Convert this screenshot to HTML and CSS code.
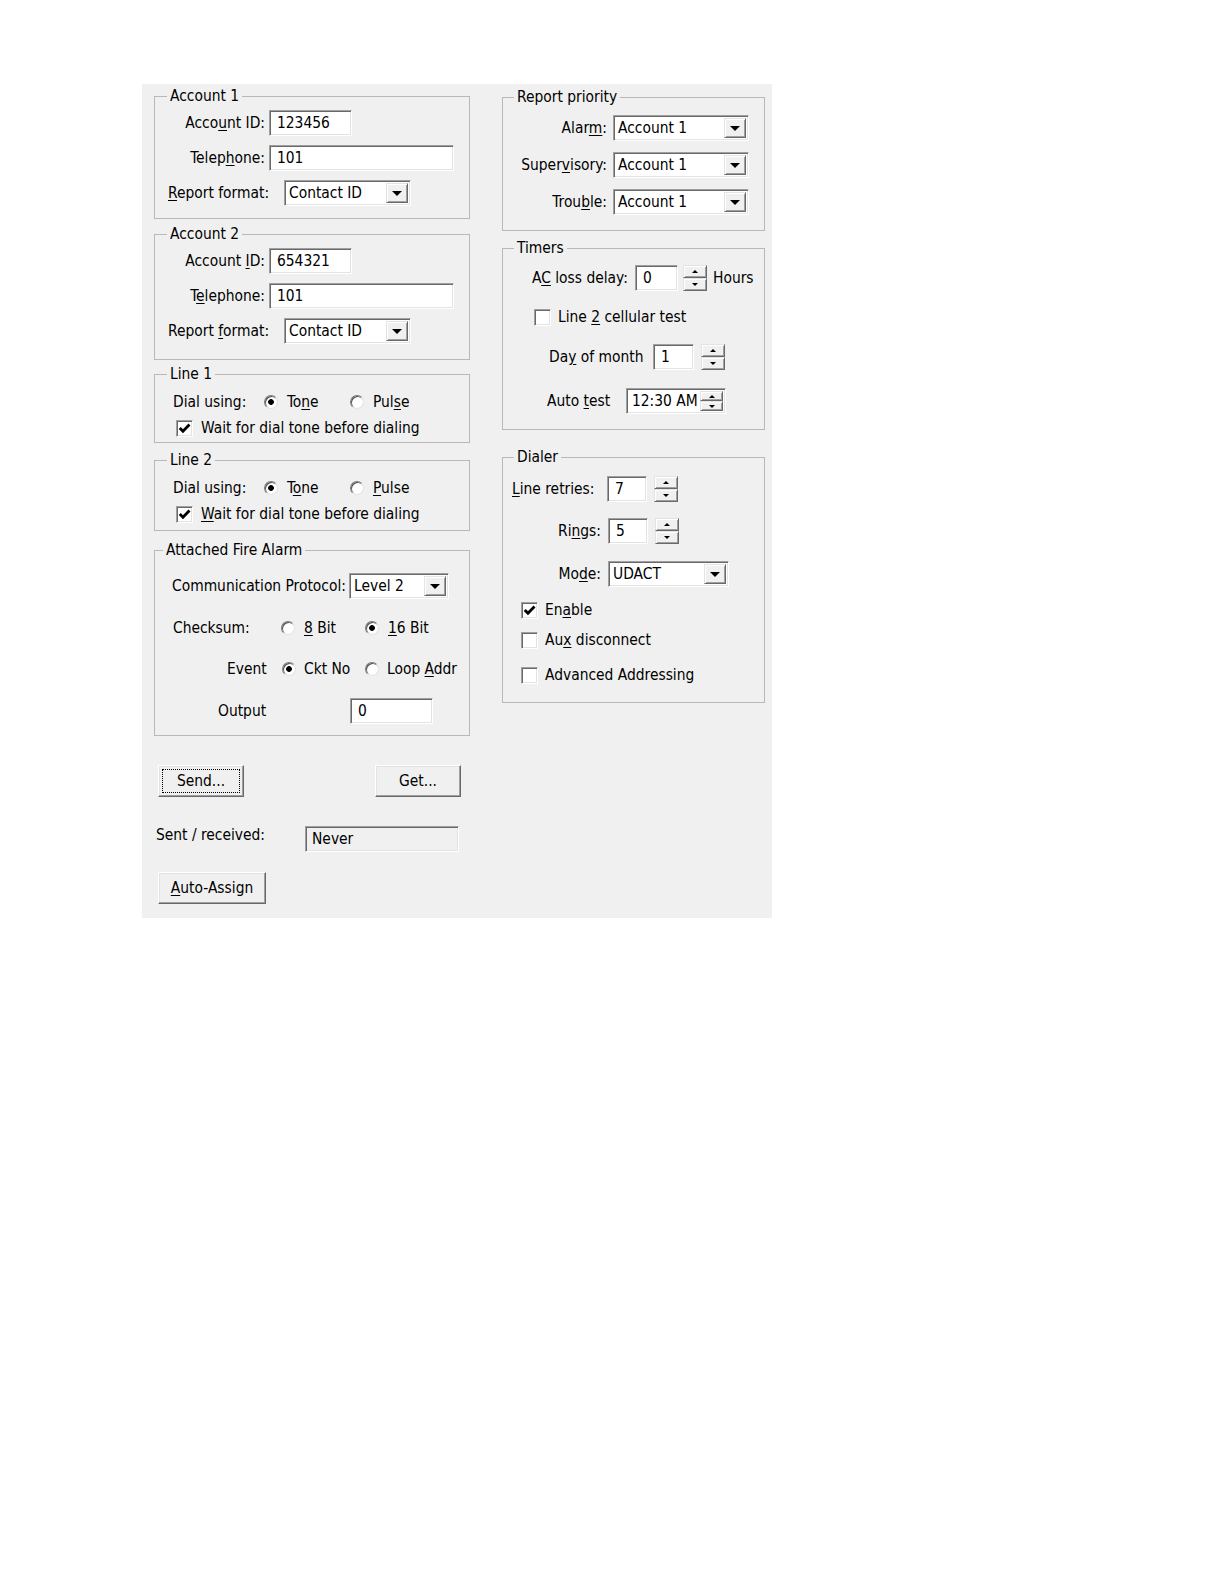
FILE: index.html
```html
<!DOCTYPE html>
<html lang="en">
<head>
<meta charset="utf-8">
<title>Communicator settings</title>
<link rel="stylesheet" href="styles.css">
</head>
<body>
<div class="panel">
  <div class="col col-left">

    <fieldset class="group acct acct1">
      <legend>Account 1</legend>
      <div class="row row-acct first">
        <span class="lbl lbl-acct">Acco<u>u</u>nt ID:</span>
        <span class="edit w-id">123456</span>
      </div>
      <div class="row row-acct">
        <span class="lbl lbl-acct">Telep<u>h</u>one:</span>
        <span class="edit w-tel">101</span>
      </div>
      <div class="row row-acct">
        <span class="lbl lbl-fmt"><u>R</u>eport format:</span>
        <span class="combo w-fmt"><span class="combo-text">Contact ID</span><span class="combo-btn"><i class="tri-down"></i></span></span>
      </div>
    </fieldset>

    <fieldset class="group acct acct2">
      <legend>Account 2</legend>
      <div class="row row-acct first">
        <span class="lbl lbl-acct">Account <u>I</u>D:</span>
        <span class="edit w-id">654321</span>
      </div>
      <div class="row row-acct">
        <span class="lbl lbl-acct">T<u>e</u>lephone:</span>
        <span class="edit w-tel">101</span>
      </div>
      <div class="row row-acct">
        <span class="lbl lbl-fmt">Report <u>f</u>ormat:</span>
        <span class="combo w-fmt"><span class="combo-text">Contact ID</span><span class="combo-btn"><i class="tri-down"></i></span></span>
      </div>
    </fieldset>

    <fieldset class="group line line1">
      <legend>Line 1</legend>
      <div class="row row-opt first">
        <span class="lbl lbl-dial">Dial using:</span>
        <span class="opt opt-tone"><span class="radio on"></span><span class="opt-text">To<u>n</u>e</span></span>
        <span class="opt"><span class="radio"></span><span class="opt-text">Pul<u>s</u>e</span></span>
      </div>
      <div class="row row-opt row-wait">
        <span class="check on"><svg viewBox="0 0 12 12"><path d="M1.6 5.6 L4.6 8.6 L10.6 2.4" /></svg></span>
        <span class="check-text">Wait for dial tone before dialing</span>
      </div>
    </fieldset>

    <fieldset class="group line line2">
      <legend>Line 2</legend>
      <div class="row row-opt first">
        <span class="lbl lbl-dial">Dial using:</span>
        <span class="opt opt-tone"><span class="radio on"></span><span class="opt-text">T<u>o</u>ne</span></span>
        <span class="opt"><span class="radio"></span><span class="opt-text"><u>P</u>ulse</span></span>
      </div>
      <div class="row row-opt row-wait">
        <span class="check on"><svg viewBox="0 0 12 12"><path d="M1.6 5.6 L4.6 8.6 L10.6 2.4" /></svg></span>
        <span class="check-text"><u>W</u>ait for dial tone before dialing</span>
      </div>
    </fieldset>

    <fieldset class="group fire">
      <legend>Attached Fire Alarm</legend>
      <div class="row row-proto">
        <span class="lbl lbl-proto">Communication Protocol:</span>
        <span class="combo w-proto"><span class="combo-text">Level 2</span><span class="combo-btn"><i class="tri-down"></i></span></span>
      </div>
      <div class="row row-opt row-cks">
        <span class="lbl lbl-cks">Checksum:</span>
        <span class="opt opt-8bit"><span class="radio"></span><span class="opt-text"><u>8</u> Bit</span></span>
        <span class="opt"><span class="radio on"></span><span class="opt-text"><u>1</u>6 Bit</span></span>
      </div>
      <div class="row row-opt row-event">
        <span class="lbl lbl-event">Event</span>
        <span class="opt opt-ckt"><span class="radio on"></span><span class="opt-text">Ckt No</span></span>
        <span class="opt"><span class="radio"></span><span class="opt-text">Loop <u>A</u>ddr</span></span>
      </div>
      <div class="row row-out">
        <span class="lbl lbl-out">Output</span>
        <span class="edit w-out">0</span>
      </div>
    </fieldset>

    <div class="btn-row">
      <span class="btn btn-default w-btn"><span class="focus">Send...</span></span>
      <span class="btn w-btn">Get...</span>
    </div>

    <div class="row sent-row">
      <span class="lbl lbl-sent">Sent / received:</span>
      <span class="static w-never">Never</span>
    </div>

    <div class="assign-row">
      <span class="btn w-assign"><u>A</u>uto-Assign</span>
    </div>
  </div>

  <div class="col col-right">

    <fieldset class="group prio">
      <legend>Report priority</legend>
      <div class="row row-prio first">
        <span class="lbl lbl-prio">Alar<u>m</u>:</span>
        <span class="combo w-prio"><span class="combo-text">Account 1</span><span class="combo-btn"><i class="tri-down"></i></span></span>
      </div>
      <div class="row row-prio">
        <span class="lbl lbl-prio">Super<u>v</u>isory:</span>
        <span class="combo w-prio"><span class="combo-text">Account 1</span><span class="combo-btn"><i class="tri-down"></i></span></span>
      </div>
      <div class="row row-prio">
        <span class="lbl lbl-prio">Trou<u>b</u>le:</span>
        <span class="combo w-prio"><span class="combo-text">Account 1</span><span class="combo-btn"><i class="tri-down"></i></span></span>
      </div>
    </fieldset>

    <fieldset class="group timers">
      <legend>Timers</legend>
      <div class="row row-ac">
        <span class="lbl lbl-ac">A<u>C</u> loss delay:</span>
        <span class="edit w-ac">0</span>
        <span class="spin spin-ac"><span class="spin-btn"><i class="tri-up-s"></i></span><span class="spin-btn"><i class="tri-down-s"></i></span></span>
        <span class="hours">Hours</span>
      </div>
      <div class="row row-opt row-cell">
        <span class="check"></span>
        <span class="check-text">Line <u>2</u> cellular test</span>
      </div>
      <div class="row row-day">
        <span class="lbl lbl-day">Da<u>y</u> of month</span>
        <span class="edit w-day">1</span>
        <span class="spin spin-day"><span class="spin-btn"><i class="tri-up-s"></i></span><span class="spin-btn"><i class="tri-down-s"></i></span></span>
      </div>
      <div class="row row-auto">
        <span class="lbl lbl-auto">Auto <u>t</u>est</span>
        <span class="dtp w-dtp"><span class="dtp-text">12:30 AM</span><span class="spin spin-dtp"><span class="spin-btn"><i class="tri-up-s"></i></span><span class="spin-btn"><i class="tri-down-s"></i></span></span></span>
      </div>
    </fieldset>

    <fieldset class="group dialer">
      <legend>Dialer</legend>
      <div class="row row-retries">
        <span class="lbl lbl-retries"><u>L</u>ine retries:</span>
        <span class="edit w-small">7</span>
        <span class="spin spin-dial"><span class="spin-btn"><i class="tri-up-s"></i></span><span class="spin-btn"><i class="tri-down-s"></i></span></span>
      </div>
      <div class="row row-rings">
        <span class="lbl lbl-dr">Ri<u>n</u>gs:</span>
        <span class="edit w-small">5</span>
        <span class="spin spin-dial"><span class="spin-btn"><i class="tri-up-s"></i></span><span class="spin-btn"><i class="tri-down-s"></i></span></span>
      </div>
      <div class="row row-mode">
        <span class="lbl lbl-dr">Mo<u>d</u>e:</span>
        <span class="combo w-mode"><span class="combo-text">UDACT</span><span class="combo-btn"><i class="tri-down"></i></span></span>
      </div>
      <div class="row row-opt row-enable">
        <span class="check on"><svg viewBox="0 0 12 12"><path d="M1.6 5.6 L4.6 8.6 L10.6 2.4" /></svg></span>
        <span class="check-text">En<u>a</u>ble</span>
      </div>
      <div class="row row-opt row-aux">
        <span class="check"></span>
        <span class="check-text">Au<u>x</u> disconnect</span>
      </div>
      <div class="row row-opt row-adv">
        <span class="check"></span>
        <span class="check-text">Advanced Addressing</span>
      </div>
    </fieldset>
  </div>
</div>
</body>
</html>
```

FILE: styles.css
```css
* {
  box-sizing: border-box;
}

body {
  margin: 0;
  background: #ffffff;
  color: #000000;
  font-family: "DejaVu Sans Condensed", "DejaVu Sans", sans-serif;
  font-stretch: condensed;
  font-size: 15.4px;
}

u {
  text-decoration: underline;
  text-underline-offset: 2px;
}

.panel {
  display: flex;
  gap: 32px;
  width: 630px;
  height: 834px;
  margin: 84px 0 0 142px;
  padding: 4px 0 0 12px;
  background: #f0f0f0;
}

.col {
  display: flex;
  flex-direction: column;
}

.col-left {
  width: 316px;
}

.col-right {
  width: 263px;
  padding-top: 1px;
}

/* ---------- group boxes ---------- */
.group {
  margin: 0;
  padding: 0;
  min-width: 0;
  border: 1px solid #b8b8b8;
}

.group legend {
  margin-left: 12px;
  padding: 0 3px;
  line-height: 16px;
}

.fire legend {
  margin-left: 8px;
}

.col-right .group legend {
  margin-left: 11px;
}

.row {
  display: flex;
  align-items: center;
}

.lbl {
  flex: none;
  white-space: nowrap;
}

/* Account boxes */
.acct1 { padding-bottom: 12px; }
.acct2 { margin-top: 7px; padding-bottom: 15px; }
.row-acct { height: 26px; margin-top: 9px; }
.row-acct.first { margin-top: 6px; }
.lbl-acct { width: 114px; padding-right: 4px; text-align: right; }
.lbl-fmt { width: 116px; margin-left: 13px; }
.w-id { width: 83px; }
.w-tel { width: 185px; }
.w-fmt { width: 127px; }

/* Line boxes */
.line1 { margin-top: 6px; padding-bottom: 4px; }
.line2 { margin-top: 9px; padding-bottom: 6px; }
.row-opt { height: 20px; }
.line1 .row-opt.first { margin-top: 10px; }
.line2 .row-opt.first { margin-top: 10px; }
.row-wait { margin-top: 6px; padding-left: 21px; }
.lbl-dial { width: 91px; margin-left: 18px; }

.opt {
  display: flex;
  align-items: center;
  flex: none;
}
.opt-text { margin-left: 9px; }
.opt-tone { width: 86px; }
.check-text { margin-left: 8px; white-space: nowrap; }

/* Fire alarm box */
.fire { margin-top: 11px; padding-bottom: 11px; }
.row-proto { height: 27px; margin-top: 14px; }
.lbl-proto { width: 177px; margin-left: 17px; }
.w-proto { width: 100px; height: 27px; }
.row-cks { margin-top: 19px; }
.lbl-cks { width: 108px; margin-left: 18px; }
.opt-8bit { width: 84px; }
.row-event { margin-top: 21px; }
.lbl-event { width: 55px; margin-left: 72px; }
.opt-ckt { width: 83px; }
.row-event .opt-text { margin-left: 8px; }
.row-out { height: 26px; margin-top: 19px; }
.lbl-out { width: 132px; margin-left: 63px; }
.w-out { width: 83px; }

/* Buttons below */
.btn-row {
  display: flex;
  justify-content: space-between;
  margin-top: 29px;
  padding: 0 9px 0 4px;
}
.sent-row { height: 27px; margin-top: 28px; }
.lbl-sent { width: 149px; margin-left: 2px; margin-bottom: 8px; }
.w-never { width: 154px; height: 27px; }
.assign-row { display: flex; margin-top: 20px; padding-left: 4px; }
.w-btn { width: 86px; }
.w-assign { width: 108px; }

/* Report priority */
.prio { padding-bottom: 15px; }
.row-prio { height: 27px; margin-top: 10px; }
.row-prio.first { margin-top: 9px; }
.lbl-prio { width: 110px; padding-right: 6px; text-align: right; }
.w-prio { width: 136px; height: 27px; }

/* Timers */
.timers { margin-top: 9px; padding-bottom: 15px; }
.row-ac { height: 26px; margin-top: 9px; }
.lbl-ac { width: 103px; margin-left: 29px; }
.w-ac { width: 43px; }
.spin-ac { margin-left: 5px; }
.hours { margin-left: 6px; }
.row-cell { margin-top: 16px; padding-left: 31px; }
.row-cell .check-text { margin-left: 7px; }
.row-day { height: 26px; margin-top: 17px; }
.lbl-day { width: 104px; margin-left: 46px; }
.w-day { width: 41px; }
.spin-day { margin-left: 7px; width: 23px; }
.row-auto { height: 26px; margin-top: 18px; }
.lbl-auto { width: 79px; margin-left: 44px; }
.w-dtp { width: 100px; }

/* Dialer */
.dialer { margin-top: 19px; padding-bottom: 17px; }
.row-retries { height: 26px; margin-top: 11px; }
.lbl-retries { width: 95px; margin-left: 9px; }
.row-rings { height: 26px; margin-top: 16px; }
.row-mode { height: 27px; margin-top: 16px; }
.lbl-dr { width: 105px; padding-right: 7px; text-align: right; }
.w-small { width: 40px; }
.spin-dial { margin-left: 7px; width: 23px; }
.w-mode { width: 121px; height: 27px; }
.row-enable { margin-top: 13px; padding-left: 18px; }
.row-aux { margin-top: 10px; padding-left: 18px; }
.row-adv { margin-top: 15px; padding-left: 18px; }
.dialer .check-text { margin-left: 7px; }

/* ---------- controls ---------- */
.edit,
.combo,
.dtp,
.static {
  display: flex;
  align-items: center;
  flex: none;
  height: 26px;
  background: #ffffff;
  border: 1px solid;
  border-color: #a0a0a0 #ffffff #ffffff #a0a0a0;
  box-shadow: inset 1px 1px 0 #696969, inset -1px -1px 0 #e3e3e3;
  white-space: nowrap;
}

.edit {
  padding-left: 7px;
}

.static {
  padding-left: 6px;
  background: #f0f0f0;
}

.combo {
  padding: 2px;
}

.combo-text {
  flex: 1;
  padding-left: 2px;
}

.combo-btn {
  display: flex;
  align-items: center;
  justify-content: center;
  align-self: stretch;
  width: 22px;
  background: #f0f0f0;
  border: 1px solid;
  border-color: #e3e3e3 #696969 #696969 #e3e3e3;
  box-shadow: inset 1px 1px 0 #ffffff, inset -1px -1px 0 #a0a0a0;
}

.tri-down {
  width: 0;
  height: 0;
  margin-top: 1px;
  border-left: 5px solid transparent;
  border-right: 5px solid transparent;
  border-top: 5px solid #000000;
}

.spin {
  display: flex;
  flex-direction: column;
  flex: none;
  width: 24px;
  height: 26px;
}

.spin-btn {
  display: flex;
  flex: 1;
  align-items: center;
  justify-content: center;
  background: #f0f0f0;
  border: 1px solid;
  border-color: #e3e3e3 #696969 #696969 #e3e3e3;
  box-shadow: inset 1px 1px 0 #ffffff, inset -1px -1px 0 #a0a0a0;
}

.tri-up-s,
.tri-down-s {
  width: 0;
  height: 0;
  border-left: 3px solid transparent;
  border-right: 3px solid transparent;
}

.tri-up-s {
  border-bottom: 3px solid #000000;
}

.tri-down-s {
  border-top: 3px solid #000000;
}

.dtp {
  padding: 2px 2px 2px 5px;
}

.dtp-text {
  flex: 1;
}

.spin-dtp {
  width: 23px;
  height: 100%;
}

.radio {
  flex: none;
  width: 14px;
  height: 14px;
  border-radius: 50%;
  background: #ffffff;
  border: 1px solid;
  border-color: #7a7a7a #e3e3e3 #e3e3e3 #7a7a7a;
  box-shadow: inset 1px 1px 0 #505050;
}

.radio.on {
  background: radial-gradient(circle at 50% 50%, #000000 0, #000000 2.5px, #ffffff 3.2px);
}

.check {
  display: flex;
  align-items: center;
  justify-content: center;
  flex: none;
  width: 17px;
  height: 17px;
  background: #ffffff;
  border: 1px solid;
  border-color: #a0a0a0 #ffffff #ffffff #a0a0a0;
  box-shadow: inset 1px 1px 0 #696969, inset -1px -1px 0 #e3e3e3;
}

.check svg {
  width: 13px;
  height: 13px;
}

.check path {
  fill: none;
  stroke: #000000;
  stroke-width: 2.6;
}

.btn {
  display: flex;
  align-items: center;
  justify-content: center;
  height: 32px;
  background: #f0f0f0;
  border: 1px solid;
  border-color: #ffffff #696969 #696969 #ffffff;
  box-shadow: inset -1px -1px 0 #a0a0a0, inset 1px 1px 0 #e3e3e3;
  white-space: nowrap;
}

.btn-default {
  padding: 3px;
}

.focus {
  display: flex;
  flex: 1;
  align-self: stretch;
  align-items: center;
  justify-content: center;
  border: 1px dotted #000000;
}
```
